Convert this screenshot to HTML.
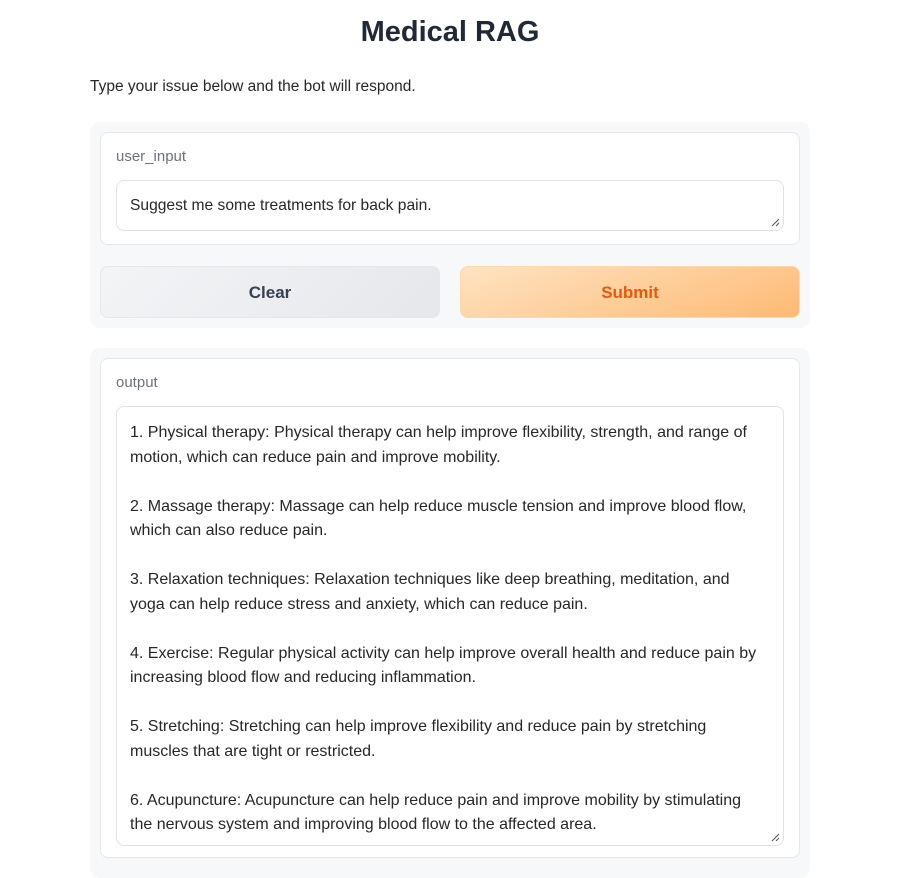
<!DOCTYPE html>
<html><head><style>
body{margin:0;background:#fff;font-family:"Liberation Sans",sans-serif;color:#27272a;width:906px;height:862px;overflow:hidden;position:relative}
.a{position:absolute;box-sizing:border-box}
h1{position:absolute;top:16px;left:0;width:900px;text-align:center;margin:0;font-size:29px;font-weight:bold;color:#1f2937}
.desc{left:90px;top:78px;font-size:15.5px;color:#27272a}
.panel{background:#f7f8fa;border-radius:10px}
.box{background:#fff;border:1px solid #e5e7eb;border-radius:8px}
.lbl{font-size:15px;color:#6b7280}
.ta{background:#fff;border:1px solid #e0e2e6;border-radius:8px;font-size:15px;color:#27272a}
.btn{border-radius:8px;font-size:17px;font-weight:bold;text-align:center;line-height:52px}
.out p{margin:0 0 24.5px 0}
.rz{position:absolute;right:3px;bottom:3px;width:9px;height:9px}
</style></head><body>
<h1>Medical RAG</h1>
<div class="a desc">Type your issue below and the bot will respond.</div>
<div class="a panel" style="left:90px;top:122px;width:720px;height:206px"></div>
<div class="a box" style="left:100px;top:132px;width:700px;height:113px"></div>
<div class="a lbl" style="left:116px;top:148px">user_input</div>
<div class="a ta" style="left:116px;top:180px;width:668px;height:51px;padding:16px 13px;font-size:15.6px">Suggest me some treatments for back pain.<svg class="rz" viewBox="0 0 9 9"><path d="M1 8L8 1M5 8L8 5" stroke="#555" stroke-width="1"/></svg></div>
<div class="a btn" style="left:100px;top:266px;width:340px;height:52px;background:linear-gradient(135deg,#f3f4f6,#e5e7eb);border:1px solid #e5e7eb;color:#374151">Clear</div>
<div class="a btn" style="left:460px;top:266px;width:340px;height:52px;background:linear-gradient(160deg,#ffe3c2,#fdba74);border:1px solid #fed7aa;color:#ea580c">Submit</div>
<div class="a panel" style="left:90px;top:348px;width:720px;height:530px"></div>
<div class="a box" style="left:100px;top:358px;width:700px;height:500px"></div>
<div class="a lbl" style="left:116px;top:374px">output</div>
<div class="a ta out" style="left:116px;top:406px;width:668px;height:440px;padding:14px 13px;overflow:hidden">
<div style="font-size:16px;line-height:24.5px;width:630px">
<p>1. Physical therapy: Physical therapy can help improve flexibility, strength, and range of motion, which can reduce pain and improve mobility.</p>
<p>2. Massage therapy: Massage can help reduce muscle tension and improve blood flow, which can also reduce pain.</p>
<p>3. Relaxation techniques: Relaxation techniques like deep breathing, meditation, and yoga can help reduce stress and anxiety, which can reduce pain.</p>
<p>4. Exercise: Regular physical activity can help improve overall health and reduce pain by increasing blood flow and reducing inflammation.</p>
<p>5. Stretching: Stretching can help improve flexibility and reduce pain by stretching muscles that are tight or restricted.</p>
<p>6. Acupuncture: Acupuncture can help reduce pain and improve mobility by stimulating the nervous system and improving blood flow to the affected area.</p>
</div>
<svg class="rz" viewBox="0 0 9 9"><path d="M1 8L8 1M5 8L8 5" stroke="#555" stroke-width="1"/></svg>
</div>
</body></html>
